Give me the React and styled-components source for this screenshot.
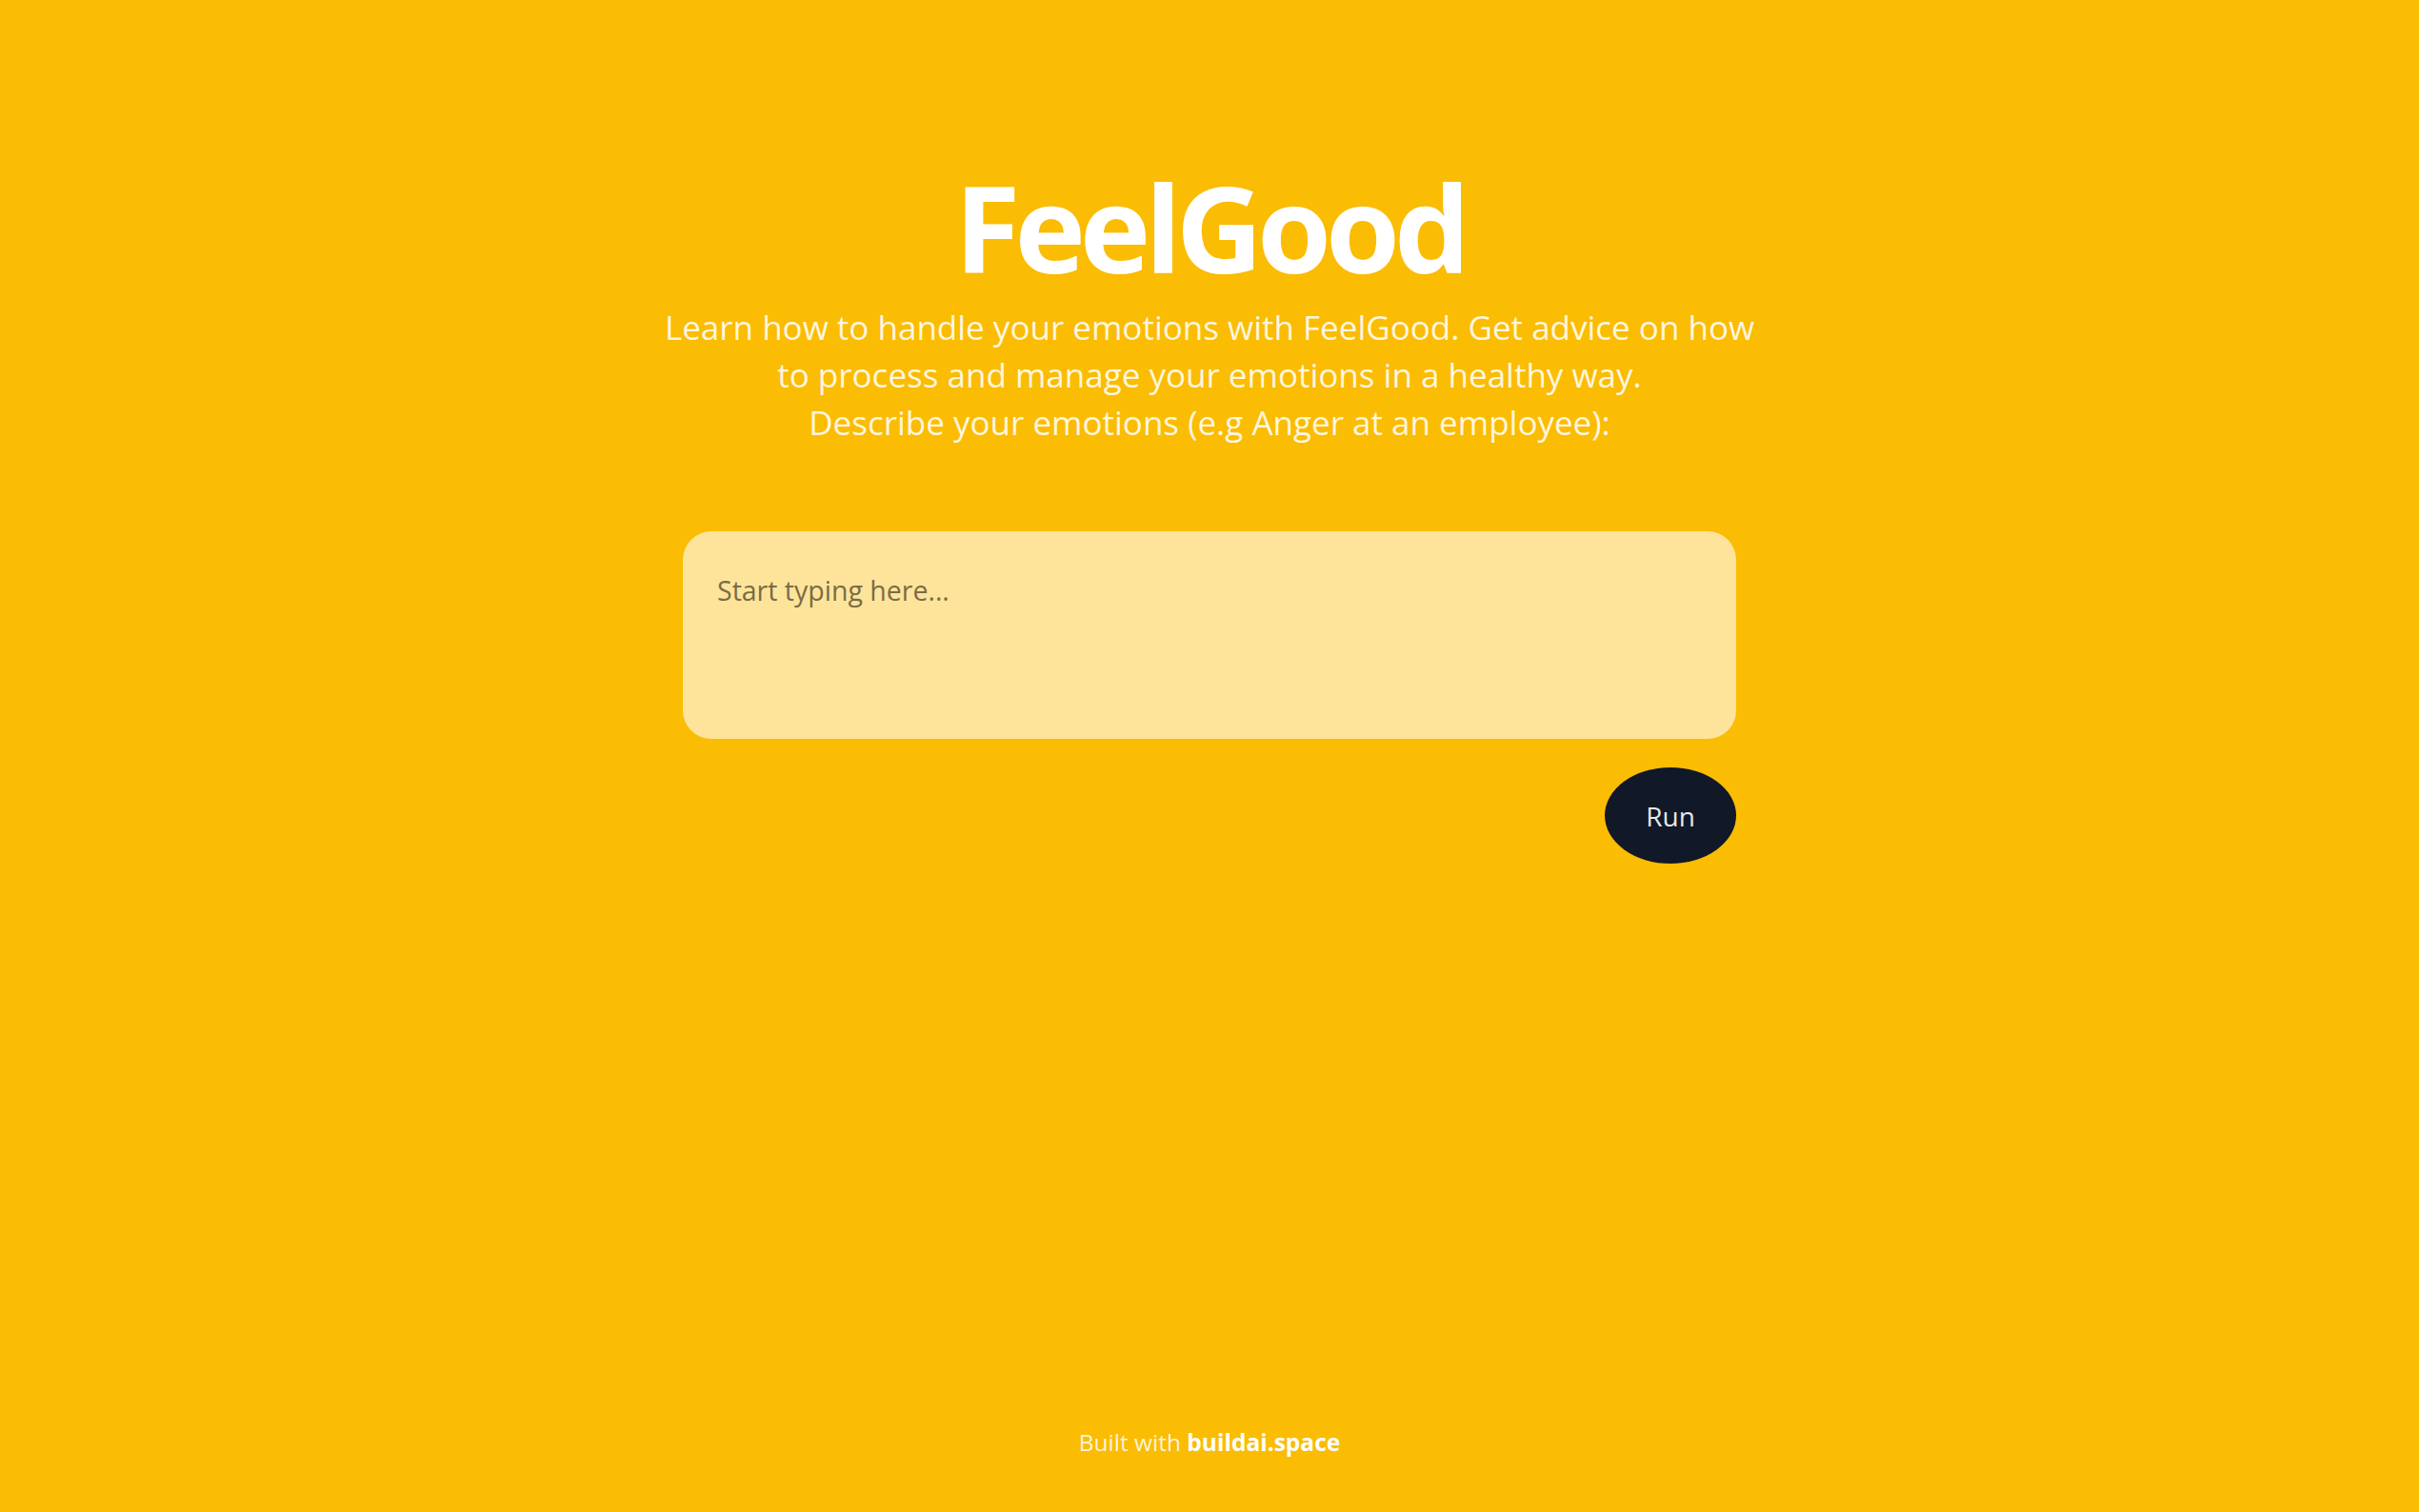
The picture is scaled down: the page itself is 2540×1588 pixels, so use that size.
import React from 'react';
import styled, { createGlobalStyle } from 'styled-components';

const GlobalStyle = createGlobalStyle`
    html, body {
        margin: 0;
        padding: 0;
        background: #fbbc04;
    }

    body {
        font-family: "Open Sans", "Liberation Sans", sans-serif;
    }
`;

const App = () => {

    return (
        <PageStyled className='Page'>
            <GlobalStyle/>
            <Main>
                <Title>FeelGood</Title>
                <Intro>
                    Learn how to handle your emotions with FeelGood. Get advice on how<br/>
                    to process and manage your emotions in a healthy way.<br/>
                    Describe your emotions (e.g Anger at an employee):
                </Intro>
                <Form>
                    <Input placeholder="Start typing here..."/>
                    <Actions>
                        <RunButton type="button">Run</RunButton>
                    </Actions>
                </Form>
            </Main>
            <Footer>
                Built with <strong>buildai.space</strong>
            </Footer>
        </PageStyled>
    );
}

export default App;

const PageStyled = styled.div`
    min-height: 100vh;
    display: flex;
    flex-direction: column;
    align-items: center;
    background: #fbbc04;
`;

const Main = styled.main`
    flex: 1;
    display: flex;
    flex-direction: column;
    align-items: center;
    padding-top: 175px;
`;

const Title = styled.h1`
    margin: 0;
    font-size: 126px;
    line-height: 1;
    font-weight: 700;
    letter-spacing: -6px;
    color: #ffffff;
`;

const Intro = styled.p`
    margin: 18px 0 0;
    font-size: 35px;
    line-height: 50px;
    text-align: center;
    white-space: nowrap;
    color: rgba(255, 255, 255, 0.88);
`;

const Form = styled.div`
    width: 1106px;
    margin-top: 89px;
    display: flex;
    flex-direction: column;
`;

const Input = styled.textarea`
    box-sizing: border-box;
    width: 100%;
    height: 218px;
    padding: 43px 36px;
    border: none;
    border-radius: 30px;
    resize: none;
    outline: none;
    font-family: inherit;
    font-size: 28.5px;
    line-height: 39px;
    color: #3f3520;
    background: rgba(255, 255, 255, 0.6);

    &::placeholder {
        color: #7b6c44;
    }
`;

const Actions = styled.div`
    display: flex;
    justify-content: flex-end;
    margin-top: 30px;
`;

const RunButton = styled.button`
    width: 138px;
    height: 101px;
    border: none;
    border-radius: 50%;
    background: #111827;
    color: #e5e7eb;
    font-family: inherit;
    font-size: 28px;
    cursor: pointer;
`;

const Footer = styled.footer`
    padding-bottom: 57px;
    font-size: 24.5px;
    line-height: 33px;
    color: rgba(255, 255, 255, 0.85);

    strong {
        font-weight: 700;
        color: #ffffff;
    }
`;
